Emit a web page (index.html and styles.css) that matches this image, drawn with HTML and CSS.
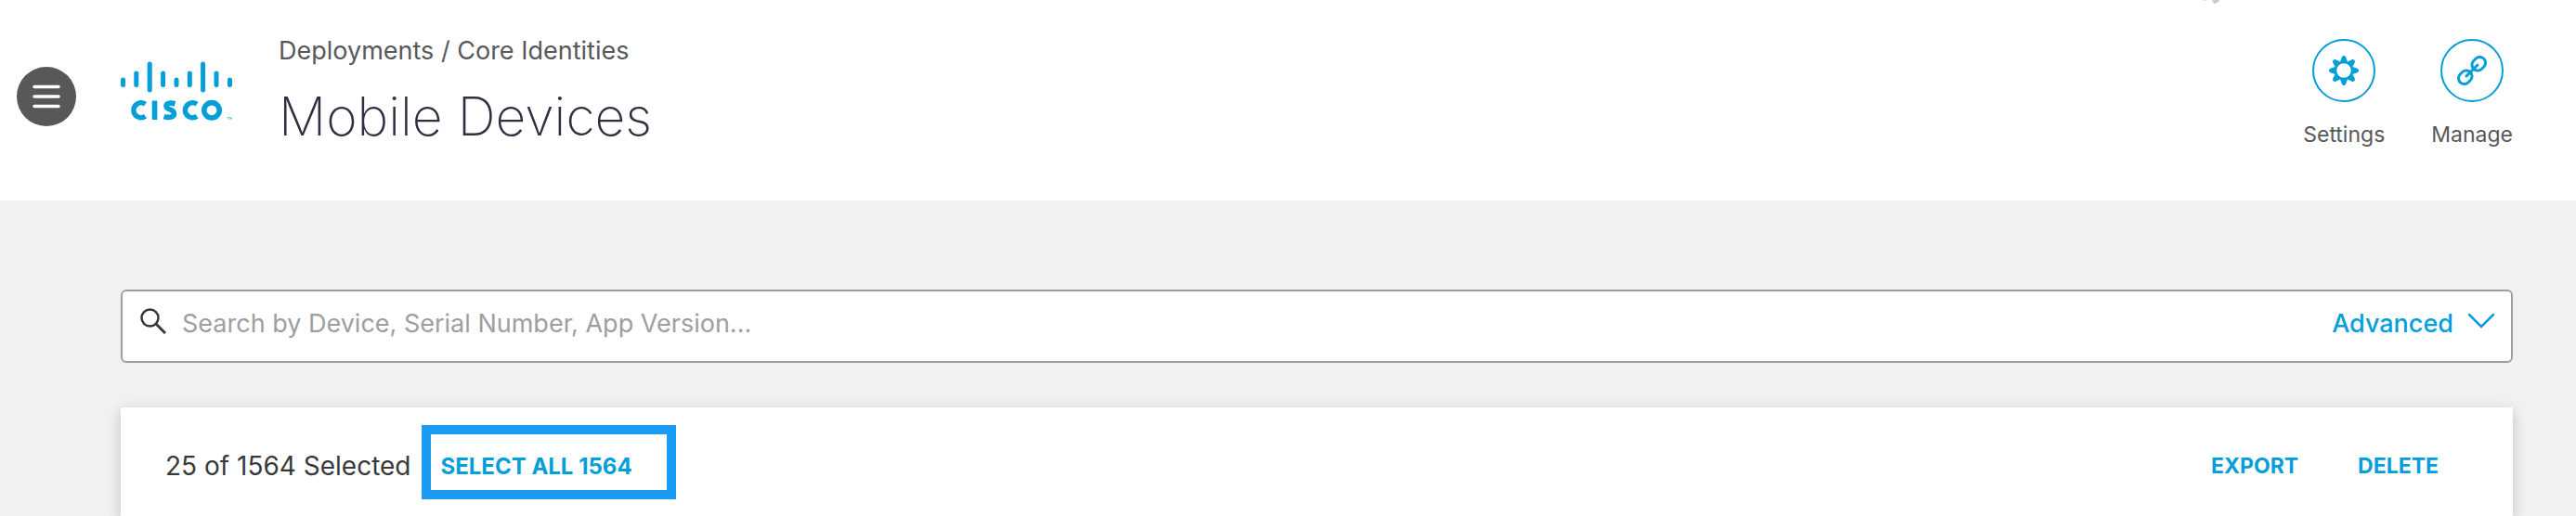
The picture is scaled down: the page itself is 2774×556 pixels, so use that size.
FILE: index.html
```html
<!DOCTYPE html>
<html lang="en">
<head>
    <meta charset="UTF-8">
    <meta name="viewport" content="width=device-width, initial-scale=1.0">
    <title>Mobile Devices</title>
    <link rel="stylesheet" href="styles.css">
</head>
<body>

    <!-- Page header -->
    <header class="header">
        <button class="menu-btn" aria-label="Menu">
            <svg width="30" height="26" viewBox="0 0 30 26">
                <path d="M2 2.500H28M2 13H28M2 23.500H28" stroke="#fff" stroke-width="3.500" stroke-linecap="round"/>
            </svg>
        </button>

        <a class="logo" href="#" aria-label="Cisco">
            <svg width="120" height="66" viewBox="0 0 120 66">
                <g stroke="#049fd9" stroke-width="5" stroke-linecap="round">
                    <path d="M2.500 20V25.500M16.800 13V25.500M31.200 3V31M45.600 13V25.500M60 20V25.500M74.300 13V25.500M88.600 3V31M103 13V25.500M117.500 20V25.500"/>
                </g>
                <g fill="none" stroke="#049fd9" stroke-width="5.600">
                    <path d="M26.500 46.200A8 8 0 1 0 26.500 59.300"/>
                    <path d="M36.500 42.500V63"/>
                    <path d="M58.500 45.800C54 44.600 49 44.800 49 48.200C49 53 57.500 50.600 57.500 56.600C57.500 61.200 50.500 60.800 46.500 59.600"/>
                    <path d="M82 46.200A8 8 0 1 0 82 59.300"/>
                    <circle cx="98" cy="52.800" r="8.200"/>
                </g>
                <path d="M114.500 60.500H117.500M116 60.500V63M118 63V60.500L119 62L120 60.500V63" fill="none" stroke="#049fd9" stroke-width="0.500"/>
            </svg>
        </a>

        <div class="heading">
            <nav class="breadcrumb">
                <a href="#">Deployments</a> / <a href="#">Core Identities</a>
            </nav>
            <h1>Mobile Devices</h1>
        </div>

        <div class="actions">
            <button class="action">
                <span class="action-icon">
                    <svg width="32" height="32" viewBox="0 0 32 32" fill="#049fd9">
                        <path id="tooth" d="M11.800 7.500L13.800 1.500Q14.400 0 16 0T18.200 1.500L20.200 7.500Z"/>
                        <use href="#tooth" transform="rotate(45 16 16)"/>
                        <use href="#tooth" transform="rotate(90 16 16)"/>
                        <use href="#tooth" transform="rotate(135 16 16)"/>
                        <use href="#tooth" transform="rotate(180 16 16)"/>
                        <use href="#tooth" transform="rotate(225 16 16)"/>
                        <use href="#tooth" transform="rotate(270 16 16)"/>
                        <use href="#tooth" transform="rotate(315 16 16)"/>
                        <circle cx="16" cy="16" r="8.800" fill="none" stroke="#049fd9" stroke-width="2"/>
                    </svg>
                </span>
                Settings
            </button>
            <button class="action">
                <span class="action-icon">
                    <svg width="32" height="32" viewBox="0 0 32 32">
                        <g transform="rotate(-45 16 16)" fill="none" stroke="#049fd9" stroke-width="3" stroke-linecap="round">
                            <rect x="-2" y="9.800" width="15.500" height="12.400" rx="6.200"/>
                            <rect x="18.500" y="9.800" width="15.500" height="12.400" rx="6.200"/>
                            <path d="M7.500 16H24.500"/>
                        </g>
                    </svg>
                </span>
                Manage
            </button>
        </div>

        <svg class="corner-mark" width="20" height="5" viewBox="0 0 20 5">
            <path d="M0 0H4L2 1ZM10 0H18Q17 3 12 4Z" fill="#ccc"/>
        </svg>
    </header>

    <main class="content">
        <!-- Search -->
        <form class="search">
            <svg class="search-icon" width="28" height="28" viewBox="0 0 28 28">
                <circle cx="10.500" cy="10.500" r="9" fill="none" stroke="#39393b" stroke-width="2.500"/>
                <path d="M17 17L27 27" stroke="#39393b" stroke-width="3"/>
            </svg>
            <input type="text" aria-label="Search devices" placeholder="Search by Device, Serial Number, App Version...">
            <button type="button" class="advanced">
                Advanced
                <svg width="28" height="16" viewBox="0 0 28 16">
                    <path d="M1 1L14 14L27 1" fill="none" stroke="#049fd9" stroke-width="2.500" stroke-linecap="round"/>
                </svg>
            </button>
        </form>

        <!-- Selected devices -->
        <section class="card">
            <span class="count">25 of 1564 Selected</span>
            <button class="link-btn select-all">SELECT ALL 1564</button>
            <div class="card-actions">
                <button class="link-btn">EXPORT</button>
                <button class="link-btn">DELETE</button>
            </div>
        </section>
    </main>

</body>
</html>
```
FILE: styles.css
```css
* {
    box-sizing: border-box;
}

body {
    margin: 0;
    min-height: 100vh;
    display: flex;
    flex-direction: column;
    background-color: #f1f1f1;
    font-family: Inter, 'Liberation Sans', sans-serif;
    color: #39393b;
}

button {
    padding: 0;
    border: none;
    background: none;
    font-family: inherit;
    cursor: pointer;
}

a {
    color: inherit;
    text-decoration: none;
}

svg {
    display: block;
}

/* Header */
.header {
    position: relative;
    display: flex;
    align-items: flex-start;
    padding: 36px 68px 52px 18px;
    background-color: #fff;
}

.menu-btn {
    display: flex;
    align-items: center;
    justify-content: center;
    width: 64px;
    height: 64px;
    margin-top: 36px;
    border-radius: 50%;
    background-color: #58585b;
}

.logo {
    margin: 30px 50px 0 48px;
}

.breadcrumb {
    font-size: 27px;
    line-height: 38px;
    color: #58585b;
}

h1 {
    margin: 14px 0 0;
    font-size: 57px;
    line-height: 76px;
    font-weight: 200;
    color: #2f2f41;
}

.actions {
    display: flex;
    gap: 50px;
    margin-left: auto;
    padding-top: 6px;
}

.action {
    display: flex;
    flex-direction: column;
    align-items: center;
    gap: 20px;
    font-size: 23px;
    line-height: 30px;
    color: #58585b;
}

.action-icon {
    display: flex;
    align-items: center;
    justify-content: center;
    width: 68px;
    height: 68px;
    border: 2px solid #049fd9;
    border-radius: 50%;
}

.corner-mark {
    position: absolute;
    top: 0;
    right: 382px;
}

/* Content */
.content {
    flex: 1;
    display: flex;
    flex-direction: column;
    gap: 48px;
    padding: 96px 68px 0 130px;
}

.search {
    display: flex;
    align-items: center;
    padding: 17px 18px 22px 19px;
    border: 2px solid #9e9ea2;
    border-radius: 6px;
    background-color: #fff;
}

.search svg {
    margin-bottom: 6px;
}

.search input {
    flex: 1;
    padding: 0;
    margin: 0 17px;
    border: none;
    outline: none;
    background: none;
    font-family: inherit;
    font-size: 27px;
    line-height: 36px;
}

.search input::placeholder {
    color: #9e9ea2;
    opacity: 1;
}

.advanced {
    display: flex;
    align-items: center;
    gap: 16px;
    font-size: 27px;
    line-height: 36px;
    font-weight: 500;
    color: #049fd9;
}

/* Card */
.card {
    flex: 1;
    display: flex;
    align-items: flex-start;
    padding: 19px 80px 0 48px;
    background-color: #fff;
    box-shadow: 0 4px 14px rgba(0, 0, 0, 0.2);
}

.count {
    font-size: 28px;
    line-height: 88px;
}

.link-btn {
    font-size: 24px;
    line-height: 88px;
    font-weight: 700;
    color: #049fd9;
}

.select-all {
    margin-left: 12px;
    padding: 10px 37px 0 10px;
    border: 10px solid #1a9cf5;
    line-height: 50px;
}

.card-actions {
    display: flex;
    gap: 64px;
    margin-left: auto;
}

.card-actions .link-btn {
    font-size: 23px;
}
```
